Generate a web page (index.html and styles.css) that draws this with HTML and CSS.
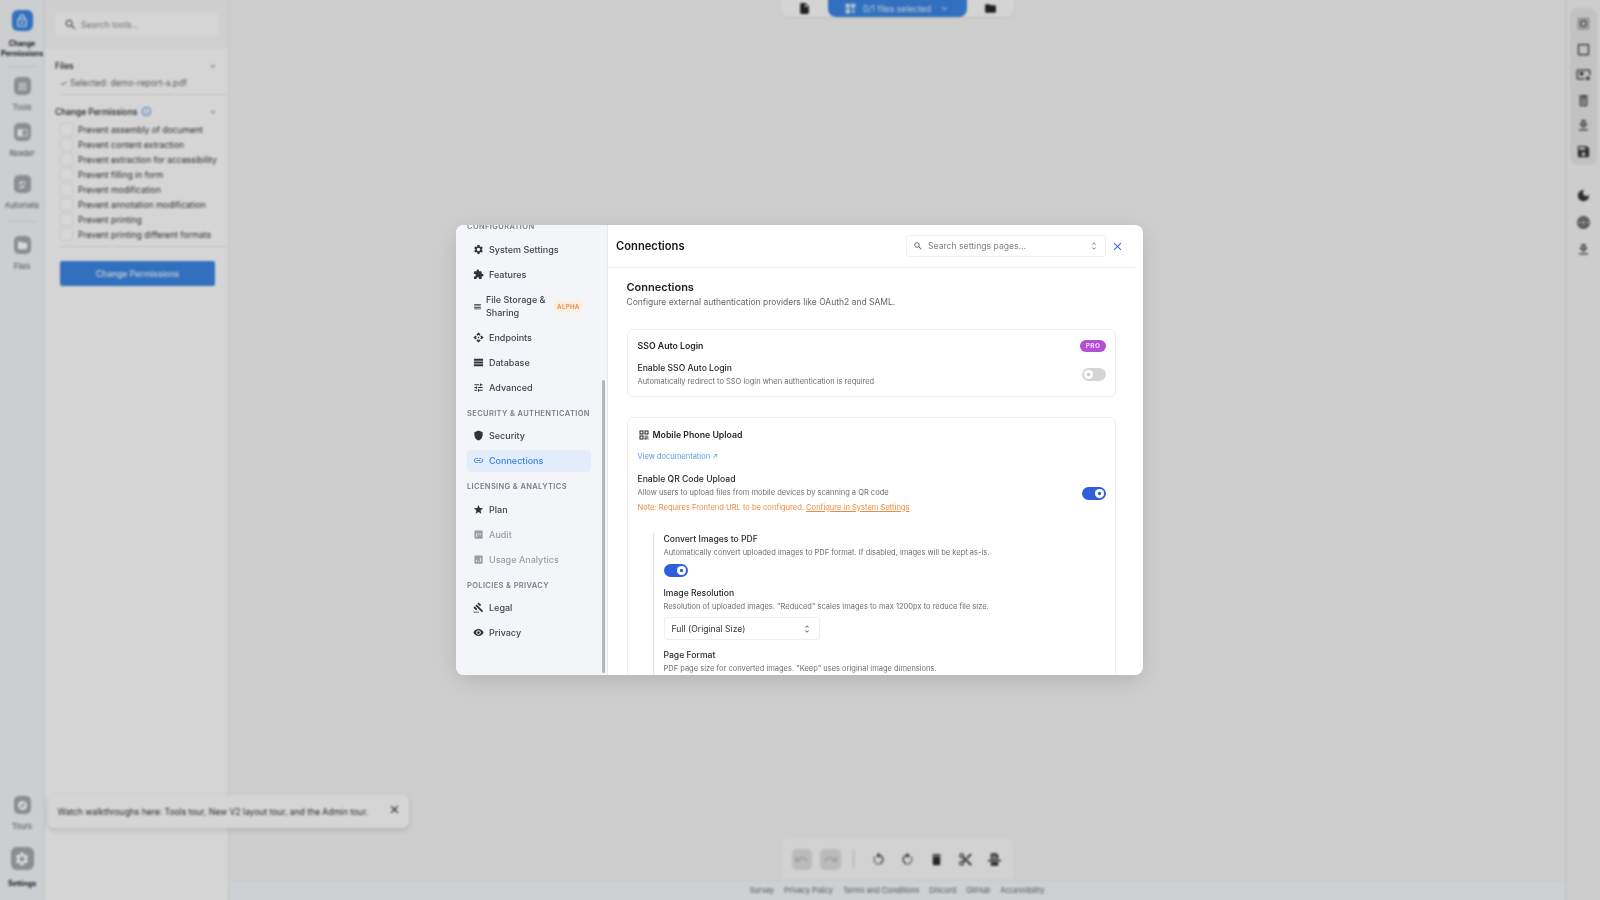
FILE: index.html
```html
<!DOCTYPE html>
<html lang="en">
<head>
<meta charset="UTF-8" />
<meta name="viewport" content="width=device-width, initial-scale=1" />
<title>Change Permissions</title>
<link rel="stylesheet" href="styles.css">
</head>
<body>

<svg class="sprite" xmlns="http://www.w3.org/2000/svg">
  <symbol id="i-lock" viewBox="0 0 24 24"><path d="M18 8h-1V6c0-2.76-2.24-5-5-5S7 3.24 7 6v2H6c-1.1 0-2 .9-2 2v10c0 1.1.9 2 2 2h12c1.1 0 2-.9 2-2V10c0-1.1-.9-2-2-2zM9 6c0-1.66 1.34-3 3-3s3 1.34 3 3v2H9V6zm9 14H6V10h12v10zm-6-3c1.1 0 2-.9 2-2s-.9-2-2-2-2 .9-2 2 .9 2 2 2z"/></symbol>
  <symbol id="i-apps" viewBox="0 0 24 24"><path d="M4 8h4V4H4v4zm6 12h4v-4h-4v4zm-6 0h4v-4H4v4zm0-6h4v-4H4v4zm6 0h4v-4h-4v4zm6-10v4h4V4h-4zm-6 4h4V4h-4v4zm6 6h4v-4h-4v4zm0 6h4v-4h-4v4z"/></symbol>
  <symbol id="i-book" viewBox="0 0 24 24"><path d="M21 5c-1.11-.35-2.33-.5-3.5-.5-1.95 0-4.05.4-5.5 1.5-1.45-1.1-3.55-1.5-5.5-1.5S2.45 4.9 1 6v14.65c0 .25.25.5.5.5.1 0 .15-.05.25-.05C3.1 20.45 5.05 20 6.5 20c1.95 0 4.05.4 5.5 1.5 1.35-.85 3.8-1.5 5.5-1.5 1.65 0 3.35.3 4.75 1.05.1.05.15.05.25.05.25 0 .5-.25.5-.5V6c-.6-.45-1.25-.75-2-1zm0 13.5c-1.1-.35-2.3-.5-3.5-.5-1.7 0-4.15.65-5.5 1.5V8c1.35-.85 3.8-1.5 5.5-1.5 1.2 0 2.4.15 3.5.5v11.5z"/></symbol>
  <symbol id="i-auto" viewBox="0 0 24 24"><path d="M4 10l6-6 3 3-6 6zM11 21l-3-3 6-6 3 3zM15 4l5 5-2 2-5-5zM4 15l5 5-2 1-4-4z"/></symbol>
  <symbol id="i-folder" viewBox="0 0 24 24"><path d="M10 4H4c-1.1 0-1.99.9-1.99 2L2 18c0 1.1.9 2 2 2h16c1.1 0 2-.9 2-2V8c0-1.1-.9-2-2-2h-8l-2-2z"/></symbol>
  <symbol id="i-explore" viewBox="0 0 24 24"><path d="M12 10.9c-.61 0-1.1.49-1.1 1.1s.49 1.1 1.1 1.1c.61 0 1.1-.49 1.1-1.1s-.49-1.1-1.1-1.1zM12 2C6.48 2 2 6.48 2 12s4.48 10 10 10 10-4.48 10-10S17.52 2 12 2zm2.19 12.19L6 18l3.81-8.19L18 6l-3.81 8.19z"/></symbol>
  <symbol id="i-settings" viewBox="0 0 24 24"><path d="M19.14 12.94c.04-.3.06-.61.06-.94 0-.32-.02-.64-.07-.94l2.03-1.58c.18-.14.23-.41.12-.61l-1.92-3.32c-.12-.22-.37-.29-.59-.22l-2.39.96c-.5-.38-1.03-.7-1.62-.94l-.36-2.54c-.04-.24-.24-.41-.48-.41h-3.84c-.24 0-.43.17-.47.41l-.36 2.54c-.59.24-1.13.57-1.62.94l-2.39-.96c-.22-.08-.47 0-.59.22L2.74 8.87c-.12.21-.08.47.12.61l2.03 1.58c-.05.3-.09.63-.09.94s.02.64.07.94l-2.03 1.58c-.18.14-.23.41-.12.61l1.92 3.32c.12.22.37.29.59.22l2.39-.96c.5.38 1.03.7 1.62.94l.36 2.54c.05.24.24.41.48.41h3.84c.24 0 .44-.17.47-.41l.36-2.54c.59-.24 1.13-.56 1.62-.94l2.39.96c.22.08.47 0 .59-.22l1.92-3.32c.12-.22.07-.47-.12-.61l-2.01-1.58zM12 15.6c-1.98 0-3.6-1.62-3.6-3.6s1.62-3.6 3.6-3.6 3.6 1.62 3.6 3.6-1.62 3.6-3.6 3.6z"/></symbol>
  <symbol id="i-search" viewBox="0 0 24 24"><path d="M15.5 14h-.79l-.28-.27C15.41 12.59 16 11.11 16 9.5 16 5.91 13.09 3 9.5 3S3 5.91 3 9.5 5.91 16 9.5 16c1.61 0 3.09-.59 4.23-1.57l.27.28v.79l5 4.99L20.49 19l-4.99-5zm-6 0C7.01 14 5 11.99 5 9.5S7.01 5 9.5 5 14 7.01 14 9.5 11.99 14 9.5 14z"/></symbol>
  <symbol id="i-close" viewBox="0 0 24 24"><path d="M19 6.41L17.59 5 12 10.59 6.41 5 5 6.41 10.59 12 5 17.59 6.41 19 12 13.41 17.59 19 19 17.59 13.41 12z"/></symbol>
  <symbol id="i-chevron" viewBox="0 0 24 24"><path d="M7.41 8.59L12 13.17l4.59-4.58L18 10l-6 6-6-6z"/></symbol>
  <symbol id="i-updown" viewBox="0 0 24 24"><path d="M12 5.83L15.17 9l1.41-1.41L12 3 7.41 7.59 8.83 9 12 5.83zm0 12.34L8.83 15l-1.41 1.41L12 21l4.59-4.59L15.17 15 12 18.17z"/></symbol>
  <symbol id="i-info" viewBox="0 0 24 24"><path d="M11 7h2v2h-2zm0 4h2v6h-2zm1-9C6.48 2 2 6.48 2 12s4.48 10 10 10 10-4.48 10-10S17.52 2 12 2zm0 18c-4.41 0-8-3.59-8-8s3.59-8 8-8 8 3.59 8 8-3.59 8-8 8z"/></symbol>
  <symbol id="i-puzzle" viewBox="0 0 24 24"><path d="M20.5 11H19V7c0-1.1-.9-2-2-2h-4V3.5C13 2.12 11.88 1 10.5 1S8 2.12 8 3.5V5H4c-1.1 0-1.99.9-1.99 2v3.8H3.5c1.49 0 2.7 1.21 2.7 2.7s-1.21 2.7-2.7 2.7H2V20c0 1.1.9 2 2 2h3.8v-1.5c0-1.49 1.21-2.7 2.7-2.7 1.49 0 2.7 1.21 2.7 2.7V22H17c1.1 0 2-.9 2-2v-4h1.5c1.38 0 2.5-1.12 2.5-2.5S21.88 11 20.5 11z"/></symbol>
  <symbol id="i-lines" viewBox="0 0 24 24"><path d="M3 15h18v-2H3v2zm0 4h18v-2H3v2zm0-8h18V9H3v2zm0-6v2h18V5H3z"/></symbol>
  <symbol id="i-api" viewBox="0 0 24 24"><path d="M14 12l-2 2-2-2 2-2 2 2zm-2-6l2.12 2.12 2.5-2.5L12 1 7.38 5.62l2.5 2.5L12 6zm-6 6l2.12-2.12-2.5-2.5L1 12l4.62 4.62 2.5-2.5L6 12zm12 0l-2.12 2.12 2.5 2.5L23 12l-4.62-4.62-2.5 2.5L18 12zm-6 6l-2.12-2.12-2.5 2.5L12 23l4.62-4.62-2.5-2.5L12 18z"/></symbol>
  <symbol id="i-storage" viewBox="0 0 24 24"><path d="M2 20h20v-4H2v4zM2 4v4h20V4H2zm0 10h20v-4H2v4z"/></symbol>
  <symbol id="i-tune" viewBox="0 0 24 24"><path d="M3 17v2h6v-2H3zM3 5v2h10V5H3zm10 16v-2h8v-2h-8v-2h-2v6h2zM7 9v2H3v2h4v2h2V9H7zm14 4v-2H11v2h10zm-6-4h2V7h4V5h-4V3h-2v6z"/></symbol>
  <symbol id="i-shield" viewBox="0 0 24 24"><path d="M12 1L3 5v6c0 5.55 3.84 10.74 9 12 5.16-1.26 9-6.45 9-12V5l-9-4z"/></symbol>
  <symbol id="i-link" viewBox="0 0 24 24"><path d="M3.9 12c0-1.71 1.39-3.1 3.1-3.1h4V7H7c-2.76 0-5 2.24-5 5s2.24 5 5 5h4v-1.9H7c-1.71 0-3.1-1.39-3.1-3.1zM8 13h8v-2H8v2zm9-6h-4v1.9h4c1.71 0 3.1 1.39 3.1 3.1s-1.39 3.1-3.1 3.1h-4V17h4c2.76 0 5-2.24 5-5s-2.24-5-5-5z"/></symbol>
  <symbol id="i-star" viewBox="0 0 24 24"><path d="M12 17.27L18.18 21l-1.64-7.03L22 9.24l-7.19-.61L12 2 9.19 8.63 2 9.24l5.46 4.73L5.82 21z"/></symbol>
  <symbol id="i-audit" viewBox="0 0 24 24"><path d="M19 3H5c-1.1 0-2 .9-2 2v14c0 1.1.9 2 2 2h14c1.1 0 2-.9 2-2V5c0-1.1-.9-2-2-2zM9 17H7v-7h2v7zm4-5h-2V9h2v3zm5-1l-3 3-1.5-1.5 1-1 .5.5 2-2z"/></symbol>
  <symbol id="i-chart" viewBox="0 0 24 24"><path d="M19 3H5c-1.1 0-2 .9-2 2v14c0 1.1.9 2 2 2h14c1.1 0 2-.9 2-2V5c0-1.1-.9-2-2-2zM9 17H7v-4h2v4zm4 0h-2v-2h2v2zm4 0h-2V8h2v9z"/></symbol>
  <symbol id="i-gavel" viewBox="0 0 24 24"><path d="M1 21h12v2H1zM5.245 8.07l2.83-2.827 14.14 14.142-2.828 2.828zM12.317 1l5.657 5.656-2.83 2.83-5.654-5.66zM3.825 9.485l5.657 5.657-2.828 2.828-5.657-5.657z"/></symbol>
  <symbol id="i-eye" viewBox="0 0 24 24"><path d="M12 4.5C7 4.5 2.73 7.61 1 12c1.73 4.39 6 7.5 11 7.5s9.27-3.11 11-7.5c-1.73-4.39-6-7.5-11-7.5zM12 17c-2.76 0-5-2.24-5-5s2.24-5 5-5 5 2.24 5 5-2.24 5-5 5zm0-8c-1.66 0-3 1.34-3 3s1.34 3 3 3 3-1.34 3-3-1.34-3-3-3z"/></symbol>
  <symbol id="i-qr" viewBox="0 0 24 24"><path d="M3 11h8V3H3v8zm2-6h4v4H5V5zM3 21h8v-8H3v8zm2-6h4v4H5v-4zM13 3v8h8V3h-8zm6 6h-4V5h4v4zM21 19h-2v2h2v-2zM15 13h-2v2h2v-2zM17 15h-2v2h2v-2zM15 17h-2v2h2v-2zM17 19h-2v2h2v-2zM19 17h-2v2h2v-2zM19 13h-2v2h2v-2zM21 15h-2v2h2v-2zM15 19h-2v2h2v-2z"/></symbol>
  <symbol id="i-file" viewBox="0 0 24 24"><path d="M6 2c-1.1 0-1.99.9-1.99 2L4 20c0 1.1.89 2 1.99 2H18c1.1 0 2-.9 2-2V8l-6-6H6zm7 7V3.5L18.5 9H13z"/></symbol>
  <symbol id="i-grid" viewBox="0 0 24 24"><path d="M3 3h8v8H3zm10 0h8v8h-8zM3 13h8v8H3zm15 0h-2v3h-3v2h3v3h2v-3h3v-2h-3z"/></symbol>
  <symbol id="i-select" viewBox="0 0 24 24"><path d="M3 5h2V3c-1.1 0-2 .9-2 2zm0 8h2v-2H3v2zm4 8h2v-2H7v2zM3 9h2V7H3v2zm10-6h-2v2h2V3zm6 0v2h2c0-1.1-.9-2-2-2zM5 21v-2H3c0 1.1.9 2 2 2zm-2-4h2v-2H3v2zM9 3H7v2h2V3zm2 18h2v-2h-2v2zm8-8h2v-2h-2v2zm0 8c1.1 0 2-.9 2-2h-2v2zm0-12h2V7h-2v2zm0 8h2v-2h-2v2zm-4 4h2v-2h-2v2zm0-16h2V3h-2v2zM7 17h10V7H7v10zm2-8h6v6H9V9z"/></symbol>
  <symbol id="i-square" viewBox="0 0 24 24"><path d="M19 3H5c-1.1 0-2 .9-2 2v14c0 1.1.9 2 2 2h14c1.1 0 2-.9 2-2V5c0-1.1-.9-2-2-2zm0 16H5V5h14v14z"/></symbol>
  <symbol id="i-picture" viewBox="0 0 24 24"><path d="M21 4H3c-1.1 0-2 .9-2 2v12c0 1.1.9 2 2 2h11v-2H3V6h18v7h2V6c0-1.1-.9-2-2-2zM6 8h6v5H6zm13 7a3 3 0 1 0 0 6 3 3 0 0 0 0-6z"/></symbol>
  <symbol id="i-bin" viewBox="0 0 24 24"><path d="M6 19c0 1.1.9 2 2 2h8c1.1 0 2-.9 2-2V7H6v12zM8 9h8v10H8V9zm7.5-5l-1-1h-5l-1 1H5v2h14V4zM10 10.5h1.5v7H10zm2.5 0H14v7h-1.5z"/></symbol>
  <symbol id="i-download" viewBox="0 0 24 24"><path d="M19 9h-4V3H9v6H5l7 7 7-7zm-8 2V5h2v6h1.17L12 13.17 9.83 11H11zm-6 7h14v2H5z"/></symbol>
  <symbol id="i-save" viewBox="0 0 24 24"><path d="M17 3H5c-1.11 0-2 .9-2 2v14c0 1.1.89 2 2 2h14c1.1 0 2-.9 2-2V7l-4-4zm-5 16c-1.66 0-3-1.34-3-3s1.34-3 3-3 3 1.34 3 3-1.34 3-3 3zm3-10H5V5h10v4z"/></symbol>
  <symbol id="i-moon" viewBox="0 0 24 24"><path d="M12 3c-4.97 0-9 4.03-9 9s4.03 9 9 9 9-4.03 9-9c0-.46-.04-.92-.1-1.36-.98 1.37-2.58 2.26-4.4 2.26-2.98 0-5.4-2.42-5.4-5.4 0-1.81.89-3.42 2.26-4.4-.44-.06-.9-.1-1.36-.1z"/></symbol>
  <symbol id="i-globe" viewBox="0 0 24 24"><path d="M11.99 2C6.47 2 2 6.48 2 12s4.47 10 9.99 10C17.52 22 22 17.52 22 12S17.52 2 11.99 2zm6.93 6h-2.95c-.32-1.25-.78-2.45-1.38-3.56 1.84.63 3.37 1.91 4.33 3.56zM12 4.04c.83 1.2 1.48 2.53 1.91 3.96h-3.82c.43-1.43 1.08-2.76 1.91-3.96zM4.26 14C4.1 13.36 4 12.69 4 12s.1-1.36.26-2h3.38c-.08.66-.14 1.32-.14 2s.06 1.34.14 2H4.26zm.82 2h2.95c.32 1.25.78 2.45 1.38 3.56-1.84-.63-3.37-1.9-4.33-3.56zm2.95-8H5.08c.96-1.66 2.49-2.93 4.33-3.56C8.81 5.55 8.35 6.75 8.03 8zM12 19.96c-.83-1.2-1.48-2.53-1.91-3.96h3.82c-.43 1.43-1.08 2.76-1.91 3.96zM14.34 14H9.66c-.09-.66-.16-1.32-.16-2s.07-1.35.16-2h4.68c.09.65.16 1.32.16 2s-.07 1.34-.16 2zm.25 5.56c.6-1.11 1.06-2.31 1.38-3.56h2.95c-.96 1.65-2.49 2.93-4.33 3.56zM16.36 14c.08-.66.14-1.32.14-2s-.06-1.34-.14-2h3.38c.16.64.26 1.31.26 2s-.1 1.36-.26 2h-3.38z"/></symbol>
  <symbol id="i-undo" viewBox="0 0 24 24"><path d="M12.5 8c-2.65 0-5.05.99-6.9 2.6L2 7v9h9l-3.62-3.62c1.39-1.16 3.16-1.88 5.12-1.88 3.54 0 6.55 2.31 7.6 5.5l2.37-.78C21.08 11.03 17.15 8 12.5 8z"/></symbol>
  <symbol id="i-redo" viewBox="0 0 24 24"><path d="M18.4 10.6C16.55 8.99 14.15 8 11.5 8c-4.65 0-8.58 3.03-9.96 7.22L3.9 16c1.05-3.19 4.05-5.5 7.6-5.5 1.95 0 3.73.72 5.12 1.88L13 16h9V7l-3.6 3.6z"/></symbol>
  <symbol id="i-rotl" viewBox="0 0 24 24"><path d="M7.11 8.53L5.7 7.11C4.8 8.27 4.24 9.61 4.07 11h2.02c.14-.87.49-1.72 1.02-2.47zM6.09 13H4.07c.17 1.39.72 2.73 1.62 3.89l1.41-1.42c-.52-.75-.87-1.59-1.01-2.47zm1.01 5.32c1.16.9 2.51 1.44 3.9 1.61V17.9c-.87-.15-1.71-.49-2.46-1.03L7.1 18.32zM13 4.07V1L8.45 5.55 13 10V6.09c2.84.48 5 2.94 5 5.91s-2.16 5.43-5 5.91v2.02c3.95-.49 7-3.85 7-7.93s-3.05-7.44-7-7.93z"/></symbol>
  <symbol id="i-rotr" viewBox="0 0 24 24"><path d="M15.55 5.55L11 1v3.07C7.06 4.56 4 7.92 4 12s3.05 7.44 7 7.93v-2.02c-2.84-.48-5-2.94-5-5.91s2.16-5.43 5-5.91V10l4.55-4.45zM19.93 11c-.17-1.39-.72-2.73-1.62-3.89l-1.42 1.42c.54.75.88 1.6 1.02 2.47h2.02zM13 17.9v2.02c1.39-.17 2.74-.71 3.9-1.61l-1.44-1.44c-.75.54-1.59.89-2.46 1.03zm3.89-2.42l1.42 1.41c.9-1.16 1.45-2.5 1.62-3.89h-2.02c-.14.87-.48 1.72-1.02 2.48z"/></symbol>
  <symbol id="i-trash" viewBox="0 0 24 24"><path d="M6 19c0 1.1.9 2 2 2h8c1.1 0 2-.9 2-2V7H6v12zM19 4h-3.5l-1-1h-5l-1 1H5v2h14V4z"/></symbol>
  <symbol id="i-cut" viewBox="0 0 24 24"><path d="M9.64 7.64c.23-.5.36-1.05.36-1.64 0-2.21-1.79-4-4-4S2 3.79 2 6s1.79 4 4 4c.59 0 1.14-.13 1.64-.36L10 12l-2.36 2.36C7.14 14.13 6.59 14 6 14c-2.21 0-4 1.79-4 4s1.79 4 4 4 4-1.79 4-4c0-.59-.13-1.14-.36-1.64L12 14l7 7h3v-1L9.64 7.64zM6 8c-1.1 0-2-.89-2-2s.9-2 2-2 2 .89 2 2-.9 2-2 2zm0 12c-1.1 0-2-.89-2-2s.9-2 2-2 2 .89 2 2-.9 2-2 2zm6-7.5c-.28 0-.5-.22-.5-.5s.22-.5.5-.5.5.22.5.5-.22.5-.5.5zM19 3l-6 6 2 2 7-7V3z"/></symbol>
  <symbol id="i-redact" viewBox="0 0 24 24"><path d="M6 2h9l3 3v6H6zm2 3v1.5h6V5zm0 3v1.5h8V8zM2 12.5h20V15H2zM6 16.5h12V22H6z"/></symbol>
</svg>

<div class="app">
  <nav class="rail">
    <a class="rail-item active first">
      <span class="rail-icon"><svg class="ic"><use href="#i-lock"/></svg></span>
      <span class="rail-label strong">Change Permissions</span>
    </a>
    <div class="rail-line"></div>
    <a class="rail-item tools">
      <span class="rail-icon"><svg class="ic"><use href="#i-apps"/></svg></span>
      <span class="rail-label">Tools</span>
    </a>
    <a class="rail-item">
      <span class="rail-icon"><svg class="ic"><use href="#i-book"/></svg></span>
      <span class="rail-label">Reader</span>
    </a>
    <a class="rail-item auto">
      <span class="rail-icon"><svg class="ic"><use href="#i-auto"/></svg></span>
      <span class="rail-label">Automate</span>
    </a>
    <div class="rail-line lower"></div>
    <a class="rail-item">
      <span class="rail-icon"><svg class="ic"><use href="#i-folder"/></svg></span>
      <span class="rail-label">Files</span>
    </a>
    <a class="rail-item tours">
      <span class="rail-icon"><svg class="ic"><use href="#i-explore"/></svg></span>
      <span class="rail-label">Tours</span>
    </a>
    <a class="rail-item big">
      <span class="rail-icon"><svg class="ic"><use href="#i-settings"/></svg></span>
      <span class="rail-label strong">Settings</span>
    </a>
  </nav>

  <aside class="panel">
    <div class="panel-search">
      <div class="tool-search">
        <svg class="ic"><use href="#i-search"/></svg>
        <span>Search tools...</span>
      </div>
    </div>
    <div class="panel-body">
      <div class="panel-head files-head">
        <span>Files</span>
        <svg class="ic chev"><use href="#i-chevron"/></svg>
      </div>
      <div class="selected">✓ Selected: demo-report-a.pdf</div>
      <div class="panel-line"></div>
      <div class="panel-head perm-head">
        <span>Change Permissions</span>
        <svg class="ic info"><use href="#i-info"/></svg>
        <svg class="ic chev"><use href="#i-chevron"/></svg>
      </div>
      <ul class="checks">
        <li><span class="box"></span>Prevent assembly of document</li>
        <li><span class="box"></span>Prevent content extraction</li>
        <li><span class="box"></span>Prevent extraction for accessibility</li>
        <li><span class="box"></span>Prevent filling in form</li>
        <li><span class="box"></span>Prevent modification</li>
        <li><span class="box"></span>Prevent annotation modification</li>
        <li><span class="box"></span>Prevent printing</li>
        <li><span class="box"></span>Prevent printing different formats</li>
      </ul>
      <div class="panel-line"></div>
      <button class="run-btn">Change Permissions</button>
    </div>
  </aside>

  <main class="main">
    <div class="topbar">
      <span class="top-side"><svg class="ic"><use href="#i-file"/></svg></span>
      <span class="top-mid">
        <svg class="ic"><use href="#i-grid"/></svg>
        0/1 files selected
        <svg class="ic small"><use href="#i-chevron"/></svg>
      </span>
      <span class="top-side"><svg class="ic"><use href="#i-folder"/></svg></span>
    </div>
    <div class="viewer"></div>
    <div class="toolbar">
      <span class="tool off"><svg class="ic"><use href="#i-undo"/></svg></span>
      <span class="tool off"><svg class="ic"><use href="#i-redo"/></svg></span>
      <span class="tool-sep"></span>
      <span class="tool"><svg class="ic"><use href="#i-rotl"/></svg></span>
      <span class="tool"><svg class="ic"><use href="#i-rotr"/></svg></span>
      <span class="tool"><svg class="ic"><use href="#i-trash"/></svg></span>
      <span class="tool"><svg class="ic"><use href="#i-cut"/></svg></span>
      <span class="tool"><svg class="ic"><use href="#i-redact"/></svg></span>
    </div>
    <footer class="footer">
      <a>Survey</a>
      <a>Privacy Policy</a>
      <a>Terms and Conditions</a>
      <a>Discord</a>
      <a>GitHub</a>
      <a>Accessibility</a>
    </footer>
  </main>

  <aside class="side">
    <div class="side-group">
      <svg class="ic"><use href="#i-select"/></svg>
      <svg class="ic"><use href="#i-square"/></svg>
      <svg class="ic"><use href="#i-picture"/></svg>
      <svg class="ic"><use href="#i-bin"/></svg>
      <svg class="ic"><use href="#i-download"/></svg>
      <svg class="ic"><use href="#i-save"/></svg>
    </div>
    <div class="side-rest">
      <svg class="ic"><use href="#i-moon"/></svg>
      <svg class="ic"><use href="#i-globe"/></svg>
      <svg class="ic"><use href="#i-download"/></svg>
    </div>
  </aside>

  <div class="toast">
    <span>Watch walkthroughs here: Tools tour, New V2 layout tour, and the Admin tour.</span>
    <svg class="ic"><use href="#i-close"/></svg>
  </div>
</div>

<div class="overlay">
  <section class="modal">
    <div class="nav">
      <div class="nav-inner">
        <h4 class="nav-title">CONFIGURATION</h4>
        <a class="nav-row"><svg class="ic"><use href="#i-settings"/></svg>System Settings</a>
        <a class="nav-row"><svg class="ic"><use href="#i-puzzle"/></svg>Features</a>
        <a class="nav-row tall">
          <svg class="ic"><use href="#i-lines"/></svg>
          <span class="tall-text">File Storage &amp; Sharing</span>
          <span class="alpha">ALPHA</span>
        </a>
        <a class="nav-row"><svg class="ic"><use href="#i-api"/></svg>Endpoints</a>
        <a class="nav-row"><svg class="ic"><use href="#i-storage"/></svg>Database</a>
        <a class="nav-row"><svg class="ic"><use href="#i-tune"/></svg>Advanced</a>
        <h4 class="nav-title">SECURITY &amp; AUTHENTICATION</h4>
        <a class="nav-row"><svg class="ic"><use href="#i-shield"/></svg>Security</a>
        <a class="nav-row current"><svg class="ic"><use href="#i-link"/></svg>Connections</a>
        <h4 class="nav-title">LICENSING &amp; ANALYTICS</h4>
        <a class="nav-row"><svg class="ic"><use href="#i-star"/></svg>Plan</a>
        <a class="nav-row muted"><svg class="ic"><use href="#i-audit"/></svg>Audit</a>
        <a class="nav-row muted"><svg class="ic"><use href="#i-chart"/></svg>Usage Analytics</a>
        <h4 class="nav-title">POLICIES &amp; PRIVACY</h4>
        <a class="nav-row"><svg class="ic"><use href="#i-gavel"/></svg>Legal</a>
        <a class="nav-row"><svg class="ic"><use href="#i-eye"/></svg>Privacy</a>
      </div>
      <div class="nav-scroll"></div>
    </div>

    <div class="content">
      <header class="content-head">
        <h2>Connections</h2>
        <div class="page-search">
          <svg class="ic"><use href="#i-search"/></svg>
          <span>Search settings pages...</span>
          <svg class="ic updown"><use href="#i-updown"/></svg>
        </div>
        <svg class="ic close"><use href="#i-close"/></svg>
      </header>
      <div class="content-body">
        <h3>Connections</h3>
        <p class="sub">Configure external authentication providers like OAuth2 and SAML.</p>

        <div class="card">
          <div class="card-head">
            <span class="card-title">SSO Auto Login</span>
            <span class="pro">PRO</span>
          </div>
          <div class="setting">
            <div>
              <div class="label">Enable SSO Auto Login</div>
              <div class="desc">Automatically redirect to SSO login when authentication is required</div>
            </div>
            <span class="toggle"></span>
          </div>
        </div>

        <div class="card upload">
          <div class="card-title with-icon"><svg class="ic"><use href="#i-qr"/></svg>Mobile Phone Upload</div>
          <a class="doc-link">View documentation ↗</a>
          <div class="setting qr">
            <div>
              <div class="label">Enable QR Code Upload</div>
              <div class="desc">Allow users to upload files from mobile devices by scanning a QR code</div>
              <div class="note">Note: Requires Frontend URL to be configured. <u>Configure in System Settings</u></div>
            </div>
            <span class="toggle on"></span>
          </div>
          <div class="nested">
            <div class="label">Convert Images to PDF</div>
            <div class="desc">Automatically convert uploaded images to PDF format. If disabled, images will be kept as-is.</div>
            <span class="toggle on under"></span>
            <div class="label">Image Resolution</div>
            <div class="desc">Resolution of uploaded images. "Reduced" scales images to max 1200px to reduce file size.</div>
            <div class="select">
              <span>Full (Original Size)</span>
              <svg class="ic"><use href="#i-updown"/></svg>
            </div>
            <div class="label">Page Format</div>
            <div class="desc">PDF page size for converted images. "Keep" uses original image dimensions.</div>
          </div>
        </div>
      </div>
    </div>
  </section>
</div>

</body>
</html>
```

FILE: styles.css
```css
* {
  box-sizing: border-box;
}
html, body {
  margin: 0;
  height: 900px;
  overflow: hidden;
}
body {
  font-family: Inter, "Liberation Sans", sans-serif;
  color: #1f2328;
  background: #f5f5f5;
}
h2, h3, h4, p, ul {
  margin: 0;
  padding: 0;
}
.sprite {
  display: none;
}
.ic {
  display: block;
  fill: currentColor;
  flex: none;
}

.app {
  display: flex;
  height: 900px;
}

/* left rail */
.rail {
  width: 45px;
  flex: none;
  display: flex;
  flex-direction: column;
  align-items: center;
  background: #f0f2f5;
  border-right: 1px solid #e4e6e9;
}
.rail-item {
  display: flex;
  flex-direction: column;
  align-items: center;
  margin-top: 10px;
  width: 100%;
}
.rail-item.tools {
  margin-top: 10px;
}
.rail-item.auto {
  margin-top: 16px;
}
.rail-item.tours {
  margin-top: auto;
}
.rail-item.big {
  margin-top: 15px;
  margin-bottom: 11px;
}
.rail-icon {
  width: 17px;
  height: 18px;
  border-radius: 5px;
  background: #a3a6ab;
  color: #fff;
  display: flex;
  align-items: center;
  justify-content: center;
}
.rail-icon .ic {
  width: 11px;
  height: 11px;
}
.active .rail-icon {
  width: 21px;
  height: 21px;
  border-radius: 6px;
  background: #3a84e0;
}
.active .rail-icon .ic {
  width: 14px;
  height: 14px;
}
.big .rail-icon {
  width: 23px;
  height: 23px;
  border-radius: 6px;
}
.big .rail-icon .ic {
  width: 16px;
  height: 16px;
}
.rail-label {
  margin-top: 8px;
  font-size: 7.5px;
  line-height: 10px;
  text-align: center;
  color: #5d6167;
}
.rail-label.strong {
  font-size: 7px;
  font-weight: 700;
  color: #24272b;
}
.big .rail-label {
  margin-top: 9px;
}
.rail-line {
  width: 29px;
  height: 1px;
  background: #dfe1e4;
  margin-top: 7px;
}
.rail-line.lower {
  margin-top: 10px;
  margin-bottom: 4px;
}

/* tool panel */
.panel {
  width: 184px;
  flex: none;
  display: flex;
  flex-direction: column;
  border-right: 1px solid #e5e5e5;
  background: #fbfbfb;
}
.panel-search {
  height: 49px;
  background: #f4f4f5;
  padding: 13px 10px 0;
}
.tool-search {
  height: 23px;
  background: #fbfbfb;
  border-radius: 4px;
  display: flex;
  align-items: center;
  gap: 4px;
  padding-left: 9px;
  font-size: 8.6px;
  color: #8c8f94;
}
.tool-search .ic {
  width: 13px;
  height: 13px;
  color: #4a4d52;
}
.panel-body {
  padding-top: 9.5px;
}
.panel-head {
  display: flex;
  align-items: center;
  height: 14px;
  padding: 0 10px;
  font-size: 8.4px;
  font-weight: 500;
  color: #26292d;
}
.panel-head .chev {
  width: 10px;
  height: 10px;
  margin-left: auto;
  color: #8a8d92;
}
.panel-head .info {
  width: 11px;
  height: 11px;
  margin-left: 4px;
  color: #3a84e0;
}
.selected {
  margin: 4.5px 0 5px;
  padding-left: 15px;
  font-size: 8.6px;
  line-height: 12px;
  color: #6b6f75;
}
.panel-line {
  height: 1px;
  margin-left: 15px;
  background: #e2e2e2;
}
.perm-head {
  margin-top: 9.5px;
}
.checks {
  list-style: none;
  margin: 3.5px 0 4px;
  padding-left: 15px;
}
.checks li {
  height: 15px;
  display: flex;
  align-items: center;
  gap: 5px;
  font-size: 8.5px;
  color: #3c4045;
}
.box {
  width: 13px;
  height: 13px;
  border: 1px solid #e8e8e8;
  background: #fdfdfd;
  border-radius: 2px;
}
.run-btn {
  display: block;
  width: 155px;
  height: 25px;
  margin: 14px 0 0 15px;
  border: none;
  border-radius: 2px;
  background: #3a84e0;
  color: #e6eefa;
  font-family: inherit;
  font-size: 8.5px;
  font-weight: 500;
}

/* viewer */
.main {
  flex: 1;
  display: flex;
  flex-direction: column;
  align-items: center;
  background: #f3f3f3;
  min-width: 0;
}
.topbar {
  width: 233px;
  height: 17px;
  display: flex;
  background: #fafafa;
  border-radius: 0 0 8px 8px;
  box-shadow: 0 1px 3px rgba(0, 0, 0, .08);
}
.top-side {
  flex: 1;
  display: flex;
  align-items: center;
  justify-content: center;
  color: #23262a;
}
.top-side .ic {
  width: 13px;
  height: 13px;
}
.top-mid {
  width: 139px;
  display: flex;
  align-items: center;
  justify-content: center;
  gap: 6px;
  background: #3a84e0;
  color: #d8e6f8;
  border-radius: 0 0 8px 8px;
  font-size: 8.6px;
}
.top-mid .ic {
  width: 13px;
  height: 13px;
}
.top-mid .ic.small {
  width: 11px;
  height: 11px;
  margin-left: 2px;
}
.viewer {
  flex: 1;
}
.toolbar {
  width: 231px;
  height: 42px;
  display: flex;
  align-items: center;
  padding-left: 10px;
  background: #f7f7f7;
  border-radius: 8px 8px 0 0;
}
.tool {
  width: 21px;
  height: 21px;
  display: flex;
  align-items: center;
  justify-content: center;
  margin-right: 8px;
  color: #2b2e33;
}
.tool .ic {
  width: 15px;
  height: 15px;
}
.tool.off {
  background: #dcdcdc;
  border-radius: 5px;
  color: #bcbcbc;
}
.tool-sep {
  width: 1px;
  height: 19px;
  background: #cfcfcf;
  margin: 0 14px 0 4px;
}
.footer {
  width: 100%;
  height: 20px;
  display: flex;
  align-items: center;
  justify-content: center;
  gap: 10px;
  background: #f3f5f8;
  border-top: 1px solid #e5e7ea;
  font-size: 7.4px;
  color: #62666c;
}

/* right strip */
.side {
  width: 35px;
  flex: none;
  background: #f1f1f1;
  border-left: 1px solid #e4e4e4;
  display: flex;
  flex-direction: column;
  align-items: center;
  color: #33363a;
}
.side .ic {
  width: 15px;
  height: 15px;
}
.side-group {
  width: 27px;
  height: 157px;
  margin-top: 8px;
  padding: 8px 0 6px;
  border-radius: 8px;
  background: #e4e4e4;
  display: flex;
  flex-direction: column;
  align-items: center;
  justify-content: space-between;
}
.side-rest {
  margin-top: 23px;
  height: 69px;
  display: flex;
  flex-direction: column;
  justify-content: space-between;
}

/* walkthrough toast */
.toast {
  position: absolute;
  left: 48px;
  top: 795px;
  width: 361px;
  height: 33px;
  display: flex;
  align-items: center;
  justify-content: space-between;
  padding: 0 8px 0 9.5px;
  border-radius: 6px;
  background: #fbfbfb;
  box-shadow: 0 2px 6px rgba(0, 0, 0, .14);
  font-size: 8.5px;
  color: #34373b;
}
.toast .ic {
  width: 13px;
  height: 13px;
  margin-bottom: 5px;
  color: #1f2328;
}

/* settings modal */
.overlay {
  position: fixed;
  inset: 0;
  display: flex;
  align-items: center;
  justify-content: center;
  padding-right: 1px;
  background: rgba(0, 0, 0, .15);
  backdrop-filter: blur(1px);
}
.modal {
  width: 687px;
  height: 450px;
  display: flex;
  overflow: hidden;
  background: #fff;
  border-radius: 8px;
  box-shadow: 0 6px 24px rgba(0, 0, 0, .14);
}
.nav {
  width: 151.5px;
  flex: none;
  position: relative;
  overflow: hidden;
  background: #f3f5f8;
  border-right: 1px solid #e6e8ec;
}
.nav-inner {
  margin-top: -4px;
  padding: 0 16px 0 11px;
}
.nav-title {
  height: 12px;
  margin: 9.5px 0 5px;
  font-size: 7.5px;
  line-height: 12px;
  font-weight: 600;
  letter-spacing: .36px;
  color: #7a7f86;
  white-space: nowrap;
}
.nav-title:first-child {
  margin-top: 0;
}
.nav-row {
  height: 22px;
  margin-bottom: 3px;
  display: flex;
  align-items: center;
  gap: 5px;
  padding-left: 6px;
  border-radius: 4px;
  font-size: 9px;
  font-weight: 500;
  color: #40454c;
  white-space: nowrap;
}
.nav-row .ic {
  width: 11px;
  height: 11px;
  color: #2f343a;
}
.nav-row.tall {
  height: 35px;
  padding-top: 2px;
  padding-left: 6px;
  gap: 4px;
}
.tall-text {
  width: 64px;
  white-space: normal;
  line-height: 12.5px;
}
.nav-row.tall .ic {
  width: 9px;
  height: 9px;
}
.alpha {
  padding: 2px 3px;
  font-size: 6px;
  font-weight: 700;
  letter-spacing: .4px;
  color: #f0904a;
  background: #fdeee2;
  border-radius: 4px;
}
.nav-row.current {
  background: #e3edfb;
  color: #3b82e6;
}
.nav-row.current .ic {
  color: #3b82e6;
}
.nav-row.muted, .nav-row.muted .ic {
  color: #9a9ea5;
}
.nav-scroll {
  position: absolute;
  left: 145.5px;
  top: 155px;
  bottom: 2px;
  width: 3px;
  border-radius: 2px;
  background: #b5b7ba;
}
.content {
  flex: 1;
  min-width: 0;
  overflow: hidden;
}
.content-head {
  height: 43px;
  margin-right: 8px;
  display: flex;
  align-items: center;
  padding-left: 8.5px;
  border-bottom: 1px solid #eff0f2;
}
.content-head h2 {
  font-size: 11.2px;
  font-weight: 600;
  color: #15181c;
}
.page-search {
  width: 200px;
  height: 22px;
  margin-left: auto;
  display: flex;
  align-items: center;
  gap: 5px;
  padding: 0 6px;
  border: 1px solid #eeeff1;
  border-radius: 3px;
  font-size: 8.65px;
  color: #80848a;
}
.page-search .ic {
  width: 10px;
  height: 10px;
  color: #5c6066;
}
.page-search .updown {
  margin-left: auto;
  color: #85888d;
}
.close {
  width: 13px;
  height: 13px;
  margin: 0 11px 0 5px;
  color: #4668d8;
}
.content-body {
  padding: 12px 27px 0 19px;
}
.content-body h3 {
  font-size: 11px;
  line-height: 14px;
  font-weight: 600;
  color: #1a1d21;
}
.sub {
  margin-top: 1.5px;
  font-size: 8.5px;
  line-height: 13px;
  color: #62666c;
}
.card {
  margin-top: 20px;
  padding: 9.5px 9px 8px 10px;
  border: 1px solid #edeef0;
  border-radius: 6px;
}
.card.upload {
  padding-bottom: 40px;
}
.card-head {
  display: flex;
  align-items: center;
  justify-content: space-between;
  height: 14px;
}
.card-title {
  font-size: 8.75px;
  line-height: 14px;
  font-weight: 600;
  color: #1f2328;
}
.with-icon {
  display: flex;
  align-items: center;
  gap: 3px;
}
.with-icon .ic {
  width: 12px;
  height: 12px;
}
.pro {
  width: 26px;
  height: 12px;
  border-radius: 6px;
  background: #b44ed6;
  color: #f3dffb;
  font-size: 6.5px;
  font-weight: 700;
  line-height: 12px;
  text-align: center;
  letter-spacing: .3px;
}
.setting {
  display: flex;
  align-items: center;
  justify-content: space-between;
  margin-top: 8.5px;
}
.label {
  font-size: 8.6px;
  line-height: 13px;
  font-weight: 500;
  color: #1f2328;
}
.desc {
  margin-top: .5px;
  font-size: 7.5px;
  line-height: 13px;
  color: #6b6f75;
}
.note {
  margin-top: 2px;
  font-size: 7.55px;
  line-height: 13px;
  color: #ee8a3c;
}
.doc-link {
  display: block;
  margin-top: 9px;
  font-size: 7.5px;
  line-height: 12px;
  color: #5b9ae6;
}
.setting.qr {
  margin-top: 10px;
}
.setting.qr .desc {
  margin-top: 0;
}
.toggle {
  position: relative;
  display: block;
  width: 24px;
  height: 13px;
  border-radius: 7px;
  background: #d4d5d7;
}
.toggle::after {
  content: "";
  position: absolute;
  left: 2px;
  top: 2px;
  width: 9px;
  height: 9px;
  border-radius: 50%;
  background: #fff;
  box-shadow: inset 0 0 0 2.8px #fff, inset 0 0 0 5px #c8c9cc;
}
.toggle.on {
  background: #2f5fdc;
}
.toggle.on::after {
  left: 13px;
  box-shadow: inset 0 0 0 2.8px #fff, inset 0 0 0 5px #2f5fdc;
}
.toggle.under {
  margin: 4.5px 0 10px;
}
.nested {
  margin: 19px 0 0 15px;
  padding-left: 10px;
  border-left: 1.5px solid #dcdde0;
}
.select {
  width: 156px;
  height: 23px;
  margin: 4px 0 8.5px;
  display: flex;
  align-items: center;
  justify-content: space-between;
  padding: 0 7px;
  border: 1px solid #eceef0;
  border-radius: 3px;
  font-size: 8.65px;
  color: #33373c;
}
.select .ic {
  width: 10px;
  height: 10px;
  color: #6a6e74;
}
```
